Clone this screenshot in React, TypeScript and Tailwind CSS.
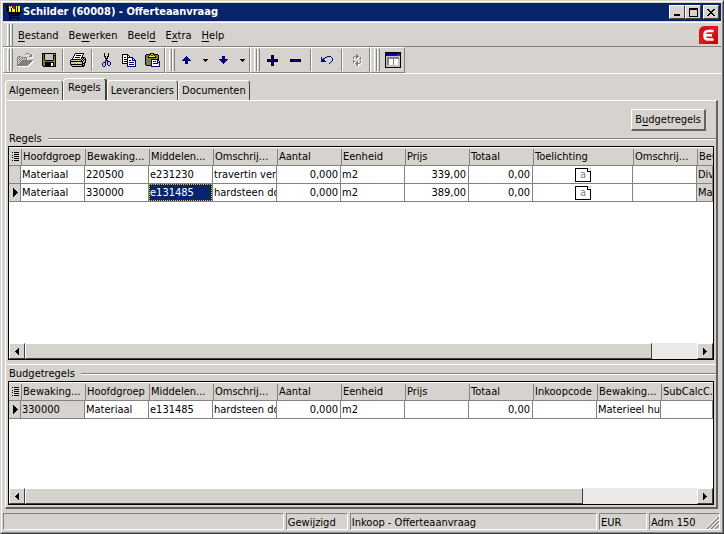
import { useState, type ReactNode } from "react";

const COLORS: Record<string, string> = {
  K: "#000000",
  W: "#ffffff",
  G: "#808080",
  L: "#c6c3bd",
  O: "#808000",
  Y: "#ffff00",
  N: "#000080",
  B: "#0000e0",
  R: "#ff0000",
  A: "#f0a030",
};

const ICONS = {
  cart: [
    "KK..............",
    ".KK.Y.Y.RR.Y.YY.",
    "..K.YYY.RR.Y.YY.",
    "..KKYYKYRRKYKYYK",
    "..KKYYKYYYKYKYYK",
    "..KKYYKYYYKYKYYK",
    "..KKYYKYYYKYKYYK",
    "...KKKKKKKKKKKKK",
    "...KKKKKKKKKKKK.",
    "...KK.K.K.K.KK..",
    "....KKKKKKKKKK..",
    "....K...........",
    "....KKKKKKKKKK..",
    "....KK......KK..",
    "....KK......KK..",
  ],
  open: [
    ".........GGG....",
    "........G...G.G.",
    ".............GG.",
    ".GGG........GGG.",
    "G.G.GGGGGG......",
    "GG.G.G.G.G......",
    "G.G.G.G.GG......",
    "GG.G.GGGGGGGGGGG",
    "G.G.GGGGGGGGGGG.",
    "GG.GGGGGGGGGGG..",
    "G.GGGGGGGGGGG...",
    "GGGGGGGGGGGG....",
    "GGGGGGGGGGG.....",
  ],
  save: [
    "KKKKKKKKKKKKKK",
    "KOKLLLLLLLLKLK",
    "KOKLLLLLLLLKKK",
    "KOKLLLLLLLLKOK",
    "KOKLLLLLLLLKOK",
    "KOKLLLLLLLLKOK",
    "KOKLLLLLLLLKOK",
    "KOOKKKKKKKKOOK",
    "KOOOOOOOOOOOOK",
    "KOOKKKKKKKKKOK",
    "KOOKKKKKKWWKOK",
    "KOOKKKKKKWWKOK",
    "KOOKKKKKKWWKOK",
    ".KKKKKKKKKKKKK",
  ],
  print: [
    ".....KKKKKKKKK..",
    "....KWWWWWWWWK..",
    "....KWKKKKKWK...",
    "...KWWWWWWWWK...",
    "...KWKKKKKWKKKK.",
    "..KWWWWWWWWKLKLK",
    ".KKKKKKKKKKLKLKK",
    "KLLLLLLLLLLKLKLK",
    "KKKKKKKKKKKKKLLK",
    "KLLLLLLLYYLLKLKK",
    "KLLLLLLLLLLLKKK.",
    "KKKKKKKKKKKKKLK.",
    ".KLLLLLLLLLLKKK.",
    "..KKKKKKKKKKKK..",
  ],
  cut: [
    "..K...K..",
    "..K...K..",
    "..K...K..",
    "..KK.KK..",
    "...K.K...",
    "...KKK...",
    "....K....",
    "...NNN...",
    "...N.NNN.",
    ".NNN.N..N",
    "N..N.N..N",
    "N..N.N..N",
    "N..N..NN.",
    ".NN......",
  ],
  copy: [
    "KKKKKK.........",
    "KWWWWKK........",
    "KWWWWKWK.......",
    "KWKKWNNNNNN....",
    "KWWWWNWWWWNN...",
    "KWKKKNWWWWNWN..",
    "KWWWWNWNNWNNNN.",
    "KWKKKNWWWWWWWN.",
    "KWWWWNWNNNNNWN.",
    "KKKKKNWWWWWWWN.",
    ".....NWNNNNNWN.",
    ".....NWWWWWWWN.",
    ".....NNNNNNNNN.",
  ],
  paste: [
    ".....KKKK......",
    ".KKKKKYYKKKKK..",
    "KOGOKYKKYKOGOK.",
    "KGOKYYYYYYKOGK.",
    "KOGKKKKKKKKGOK.",
    "KGOGOGOGOGOGOK.",
    "KOGOGONNNNNNNK.",
    "KGOGOGNWWWWWNN.",
    "KOGOGONWNNNWNWN",
    "KGOGOGNWWWWWNNN",
    "KOGOGONWNNNNNWN",
    "KGOGOGNWWWWWWWN",
    ".KKKKKNWWWWWWWN",
    "......NNNNNNNNN",
  ],
  up: [
    "....N....",
    "...NNN...",
    "..NNNNN..",
    ".NNNNNNN.",
    "NNNNNNNNN",
    "...NNN...",
    "...NNN...",
    "...NNN...",
  ],
  down: [
    "...NNN...",
    "...NNN...",
    "...NNN...",
    "NNNNNNNNN",
    ".NNNNNNN.",
    "..NNNNN..",
    "...NNN...",
    "....N....",
  ],
  drop: ["KKKKK", ".KKK.", "..K.."],
  plus: [
    "....KKK....",
    "....KNK....",
    "....KNK....",
    "....KNK....",
    "KKKKKNKKKKK",
    "KNNNNNNNNNK",
    "KKKKKNKKKKK",
    "....KNK....",
    "....KNK....",
    "....KNK....",
    "....KKK....",
  ],
  minus: ["KKKKKKKKKKK", "KNNNNNNNNNK", "KKKKKKKKKKK"],
  undo: [
    "......NNNN..",
    "N...NN....N.",
    "N.NN.......N",
    "NNN........N",
    "NNNN.......N",
    "NNNNN.....N.",
    ".........N..",
    "........N...",
  ],
  refresh: [
    "...G.....",
    "...GG....",
    ".GGGGG...",
    "G..GG..G.",
    "G..G..GG.",
    ".......G.",
    "G........",
    "GG..G..G.",
    "G..GG..G.",
    "..GGGGG..",
    "...GG....",
    "....G....",
  ],
  form: [
    "KKKKKKKKKKKKKKKK",
    "KBNBNBNBNBNBNBNK",
    "KNBNBNBNBNBNBRBK",
    "KBBBBBBBBBBBBRRK",
    "KLLLLLLLLLLLLLLK",
    "KLGGGGGGGGGGGGLK",
    "KLGGGGGGGGGGGGLK",
    "KLGGWWWWGWWWWLLK",
    "KLGGWWWWGWWWWLLK",
    "KLGGWWWWGWWWWLLK",
    "KLGGWWWWGWWWWLLK",
    "KLGGWWWWGWWWWLLK",
    "KLGGWWWWGWWWWLLK",
    "KLLLLLLLLLLLLLLK",
    "KLLLLLLLLLLLLLLK",
    "KKKKKKKKKKKKKKKK",
  ],
  min: ["KKKKKK", "KKKKKK"],
  max: [
    "KKKKKKKKK",
    "KKKKKKKKK",
    "K.......K",
    "K.......K",
    "K.......K",
    "K.......K",
    "K.......K",
    "K.......K",
    "KKKKKKKKK",
  ],
  close: [
    "KK....KK",
    ".KK..KK.",
    "..KKKK..",
    "...KK...",
    "..KKKK..",
    ".KK..KK.",
    "KK....KK",
  ],
  left: ["...K", "..KK", ".KKK", "KKKK", ".KKK", "..KK", "...K"],
  right: ["K...", "KK..", "KKK.", "KKKK", "KKK.", "KK..", "K..."],
  current: ["K....", "KK...", "KKK..", "KKKK.", "KKKKK", "KKKK.", "KKK..", "KK...", "K...."],
  list: [
    "K.KKKKK",
    ".......",
    "..KKKKK",
    "K......",
    "..KKKKK",
    "K......",
    "..KKKKK",
    ".......",
    "K.KKKKK",
  ],
} as const;

type IconName = keyof typeof ICONS;

function PixelIcon({ name, shadow = false }: { name: IconName; shadow?: boolean }) {
  const rows = ICONS[name];
  const extra = shadow ? 1 : 0;
  const width = rows[0].length + extra;
  const height = rows.length + extra;
  const cells = (offset: number, color?: string) =>
    rows.flatMap((row, y) =>
      [...row].map((c, x) =>
        c === "." ? null : (
          <rect key={`${offset}-${x}-${y}`} x={x + offset} y={y + offset} width="1" height="1" fill={color ?? COLORS[c]} />
        ),
      ),
    );
  return (
    <svg width={width} height={height} viewBox={`0 0 ${width} ${height}`} shapeRendering="crispEdges" className="shrink-0" aria-hidden="true">
      {shadow && cells(1, "#ffffff")}
      {cells(0)}
    </svg>
  );
}

const RAISED = "border border-t-white border-l-white border-r-[#404040] border-b-[#404040] bg-[#d6d3ce]";

function TitleBar() {
  const button = `flex h-3.5 w-4 justify-center ${RAISED}`;
  return (
    <header className="flex h-[18px] items-center bg-[#08246b] px-0.5 text-white">
      <PixelIcon name="cart" />
      <h1 className="ml-0.5 flex-1 truncate text-[11px] font-bold">Schilder (60008) - Offerteaanvraag</h1>
      <button aria-label="Minimaliseren" className={`${button} items-end pb-0.5`}>
        <PixelIcon name="min" />
      </button>
      <button aria-label="Maximaliseren" className={`${button} items-center`}>
        <PixelIcon name="max" />
      </button>
      <button aria-label="Sluiten" className={`${button} ml-0.5 items-center`}>
        <PixelIcon name="close" />
      </button>
    </header>
  );
}

function Handle() {
  return (
    <span className="flex h-[22px] shrink-0">
      <span className="w-[3px] border-r border-l border-r-[#848284] border-l-white" />
      <span className="w-[3px] border-r border-l border-r-[#848284] border-l-white" />
    </span>
  );
}

const MENUS = [
  ["", "B", "estand"],
  ["Be", "w", "erken"],
  ["Beel", "d", ""],
  ["E", "x", "tra"],
  ["", "H", "elp"],
];

function MenuBar() {
  return (
    <nav className="mt-px flex h-[25px] items-center border-t border-b border-t-white border-b-[#848284] pr-[3px] pl-1">
      <Handle />
      {MENUS.map(([before, key, after]) => (
        <button key={before + key + after} className="px-[5px] pt-[3px]">
          {before}
          <u className="underline-offset-2">{key}</u>
          {after}
        </button>
      ))}
      <svg width="19" height="18" viewBox="0 0 19 18" className="ml-auto" aria-hidden="true">
        <defs>
          <linearGradient id="brand" x1="0" y1="0" x2="1" y2="1">
            <stop offset="0" stopColor="#d01018" />
            <stop offset="0.5" stopColor="#e01820" />
            <stop offset="1" stopColor="#b80008" />
          </linearGradient>
        </defs>
        <path d="M6 0H19V18H0V6Q0 0 6 0Z" fill="url(#brand)" />
        <path d="M14.500 5H9Q5.500 5 5.500 9.200T9 13.500H14.500M6 9.200H13" fill="none" stroke="#fff" strokeWidth="2.600" />
      </svg>
    </nav>
  );
}

function Group({ children }: { children: ReactNode }) {
  return (
    <div className="flex h-[26px] items-center border border-t-white border-r-[#848284] border-b-[#848284] border-l-white pl-[3px]">
      <Handle />
      {children}
    </div>
  );
}

function Tool({ icon, label, disabled, narrow }: { icon: IconName; label: string; disabled?: boolean; narrow?: boolean }) {
  return (
    <button aria-label={label} disabled={disabled} className={`flex h-[22px] items-center justify-center ${narrow ? "w-3.5" : "w-[23px]"}`}>
      <PixelIcon name={icon} shadow={disabled} />
    </button>
  );
}

function Separator({ wide }: { wide?: boolean }) {
  return <span className={`h-[22px] w-0.5 border-r border-l border-r-white border-l-[#848284] ${wide ? "mx-[3px]" : "mx-0.5"}`} />;
}

function Toolbar() {
  return (
    <div role="toolbar" className="flex border-b border-white">
      <Group>
        <span className="w-px" />
        <Tool icon="open" label="Openen" disabled />
        <Tool icon="save" label="Opslaan" />
        <Separator />
        <Tool icon="print" label="Afdrukken" />
        <Separator />
        <Tool icon="cut" label="Knippen" />
        <Tool icon="copy" label="Kopiëren" />
        <Tool icon="paste" label="Plakken" />
      </Group>
      <Group>
        <Tool icon="up" label="Vorige" />
        <Tool icon="drop" label="Vorige kiezen" narrow />
        <Tool icon="down" label="Volgende" />
        <Tool icon="drop" label="Volgende kiezen" narrow />
      </Group>
      <Group>
        <span className="w-px" />
        <Tool icon="plus" label="Toevoegen" />
        <Tool icon="minus" label="Verwijderen" />
        <Separator wide />
        <Tool icon="undo" label="Ongedaan maken" />
        <Separator wide />
        <Tool icon="refresh" label="Vernieuwen" disabled />
      </Group>
      <Group>
        <span className="w-px" />
        <Tool icon="form" label="Formulier" />
      </Group>
    </div>
  );
}

const TABS = ["Algemeen", "Regels", "Leveranciers", "Documenten"];

function Tabs({ active, onSelect }: { active: string; onSelect: (tab: string) => void }) {
  const edge = "rounded-t-sm border-t border-l border-t-white border-l-white border-r-[#404040]";
  return (
    <div role="tablist" className="ml-0.5 flex h-[26px] items-end">
      {TABS.map((tab) => (
        <button
          key={tab}
          role="tab"
          aria-selected={tab === active}
          onClick={() => onSelect(tab)}
          className={
            tab === active
              ? `${edge} -mb-px h-[23px] border-r-2 bg-[#d6d3ce] px-1 pb-1`
              : `${edge} h-5 border-r px-[3px]`
          }
        >
          {tab}
        </button>
      ))}
    </div>
  );
}

function NoteIcon() {
  return (
    <span className="relative mx-auto mt-0.5 block h-3.5 w-4 border border-black bg-white text-center text-[11px] leading-[11px] text-[#848284]">
      a
      <svg width="4" height="4" viewBox="0 0 4 4" className="absolute -top-px -right-px" shapeRendering="crispEdges" aria-hidden="true">
        <path d="M0 0H4V4Z" fill="#d6d3ce" />
        <path d="M0 0H1V3H4V4H0Z" fill="#000" />
      </svg>
    </span>
  );
}

interface Column {
  label: string;
  width: number;
  right?: boolean;
  fixed?: boolean;
}

interface GridProps {
  columns: Column[];
  rows: ReactNode[][];
  current: number;
  selected?: [number, number];
  thumb: number;
  label: string;
  className: string;
}

function DataGrid({ columns, rows, current, selected, thumb, label, className }: GridProps) {
  return (
    <div className={`flex flex-col border border-black bg-white ${className}`}>
      <div className="min-h-0 flex-1 overflow-hidden">
        <table aria-label={label} className="w-full table-fixed border-separate border-spacing-0 text-left leading-4">
          <colgroup>
            <col className="w-3" />
            {columns.map((c, i) => (
              <col key={i} style={c.width ? { width: c.width } : undefined} />
            ))}
          </colgroup>
          <thead>
            <tr className="h-[19px] bg-[#d6d3ce]">
              <th className="border-t border-b border-t-white border-b-[#848284] p-0 pl-[3px]">
                <PixelIcon name="list" />
              </th>
              {columns.map((c, i) => (
                <th key={i} className="overflow-hidden border-t border-b border-t-white border-b-[#848284] p-0 font-normal whitespace-nowrap">
                  <span className="block overflow-hidden border-l border-[#848284] pl-px">{c.label}</span>
                </th>
              ))}
            </tr>
          </thead>
          <tbody>
            {rows.map((row, r) => (
              <tr key={r} className="h-[18px]">
                <td className="border-r border-b border-[#848284] bg-[#d6d3ce] p-0 pl-1">{r === current && <PixelIcon name="current" />}</td>
                {row.map((cell, c) => {
                  const isSelected = selected?.[0] === r && selected?.[1] === c;
                  return (
                    <td
                      key={c}
                      className={`overflow-hidden border-r border-b border-[#848284] p-0 whitespace-nowrap ${columns[c].fixed ? "bg-[#d6d3ce]" : ""}`}
                    >
                      <div
                        className={`h-[17px] overflow-hidden leading-[17px] ${columns[c].right ? "pr-0.5 text-right" : "pl-px"} ${
                          isSelected ? "bg-[#08246b] text-white outline-1 -outline-offset-1 outline-[#f0c060] outline-dotted" : ""
                        }`}
                      >
                        {cell}
                      </div>
                    </td>
                  );
                })}
              </tr>
            ))}
          </tbody>
        </table>
      </div>
      <div className="flex h-4 bg-[#ebe9e6]">
        <button aria-label="Naar links" className={`flex w-4 items-center justify-center ${RAISED}`}>
          <PixelIcon name="left" />
        </button>
        <div className="flex-1">
          <div className={`h-4 ${RAISED}`} style={{ width: `${thumb}%` }} />
        </div>
        <button aria-label="Naar rechts" className={`flex w-4 items-center justify-center ${RAISED}`}>
          <PixelIcon name="right" />
        </button>
      </div>
    </div>
  );
}

function GroupLabel({ children }: { children: ReactNode }) {
  return (
    <div className="flex h-[15px] items-center gap-1.5 pl-px">
      <h2>{children}</h2>
      <span className="-mr-0.5 h-0.5 flex-1 border-t border-b border-t-[#848284] border-b-white" />
    </div>
  );
}

const RULE_COLUMNS: Column[] = [
  { label: "Hoofdgroep", width: 64 },
  { label: "Bewaking...", width: 64 },
  { label: "Middelen...", width: 64 },
  { label: "Omschrij...", width: 64 },
  { label: "Aantal", width: 64, right: true },
  { label: "Eenheid", width: 64 },
  { label: "Prijs", width: 64, right: true },
  { label: "Totaal", width: 64, right: true },
  { label: "Toelichting", width: 100 },
  { label: "Omschrij...", width: 64 },
  { label: "BeG", width: 0, fixed: true },
];

const RULES: ReactNode[][] = [
  ["Materiaal", "220500", "e231230", "travertin ver", "0,000", "m2", "339,00", "0,00", <NoteIcon />, "", "Div"],
  ["Materiaal", "330000", "e131485", "hardsteen do", "0,000", "m2", "389,00", "0,00", <NoteIcon />, "", "Ma"],
];

const BUDGET_COLUMNS: Column[] = [
  { label: "Bewaking...", width: 64, fixed: true },
  { label: "Hoofdgroep", width: 64 },
  { label: "Middelen...", width: 64 },
  { label: "Omschrij...", width: 64 },
  { label: "Aantal", width: 64, right: true },
  { label: "Eenheid", width: 64 },
  { label: "Prijs", width: 64, right: true },
  { label: "Totaal", width: 64, right: true },
  { label: "Inkoopcode", width: 64 },
  { label: "Bewaking...", width: 64 },
  { label: "SubCalcC.", width: 0 },
];

const BUDGET: ReactNode[][] = [["330000", "Materiaal", "e131485", "hardsteen do", "0,000", "m2", "", "0,00", "", "Materieel hu", ""]];

function StatusBar() {
  const field = "border border-t-[#848284] border-l-[#848284] border-r-white border-b-white pl-px";
  return (
    <footer className="mt-1 mr-px flex h-[17px] gap-0.5 leading-[17px]">
      <span className={`${field} flex-[281]`} />
      <span className={`${field} w-[62px]`}>Gewijzigd</span>
      <span className={`${field} flex-[247]`}>Inkoop - Offerteaanvraag</span>
      <span className={`${field} w-12`}>EUR</span>
      <span className={`${field} flex w-[71px] justify-between`}>
        Adm 150
        <svg width="12" height="12" viewBox="0 0 12 12" className="self-end" aria-hidden="true">
          <path d="M0 12L12 0M4 12L12 4M8 12L12 8" stroke="#848284" strokeWidth="1.500" />
          <path d="M-1.500 12L12 -1.500M2.500 12L12 2.500M6.500 12L12 6.500" stroke="#fff" />
        </svg>
      </span>
    </footer>
  );
}

export default function App() {
  const [tab, setTab] = useState("Regels");
  return (
    <div className="h-screen border border-t-[#d6d3ce] border-r-[#404040] border-b-[#404040] border-l-[#d6d3ce] bg-[#d6d3ce] font-['DejaVu_Sans_Condensed','DejaVu_Sans',sans-serif] text-[11px] leading-4 text-black">
      <div className="flex h-full flex-col border border-t-white border-r-[#848284] border-b-[#848284] border-l-white px-px pt-px pb-0.5">
        <TitleBar />
        <MenuBar />
        <Toolbar />
        <Tabs active={tab} onSelect={setTab} />
        <main className="mr-[3px] ml-0.5 flex min-h-0 flex-1 flex-col border-t border-r-2 border-b-2 border-l border-t-white border-r-[#636163] border-b-[#636163] border-l-white px-0.5 pt-2 pb-0.5">
          <button className={`mr-2 h-[22px] self-end px-[3px] ${RAISED} border-r-2 border-b-2 border-r-[#636163] border-b-[#636163]`}>
            B<u className="underline-offset-2">u</u>dgetregels
          </button>
          <GroupLabel>Regels</GroupLabel>
          <DataGrid label="Regels" columns={RULE_COLUMNS} rows={RULES} current={1} selected={[1, 2]} thumb={93.3} className="min-h-0 flex-1" />
          <div className="-mx-0.5 mt-1 mb-px h-px bg-white" />
          <GroupLabel>Budgetregels</GroupLabel>
          <DataGrid label="Budgetregels" columns={BUDGET_COLUMNS} rows={BUDGET} current={0} thumb={83} className="h-[124px]" />
        </main>
        <StatusBar />
      </div>
    </div>
  );
}
